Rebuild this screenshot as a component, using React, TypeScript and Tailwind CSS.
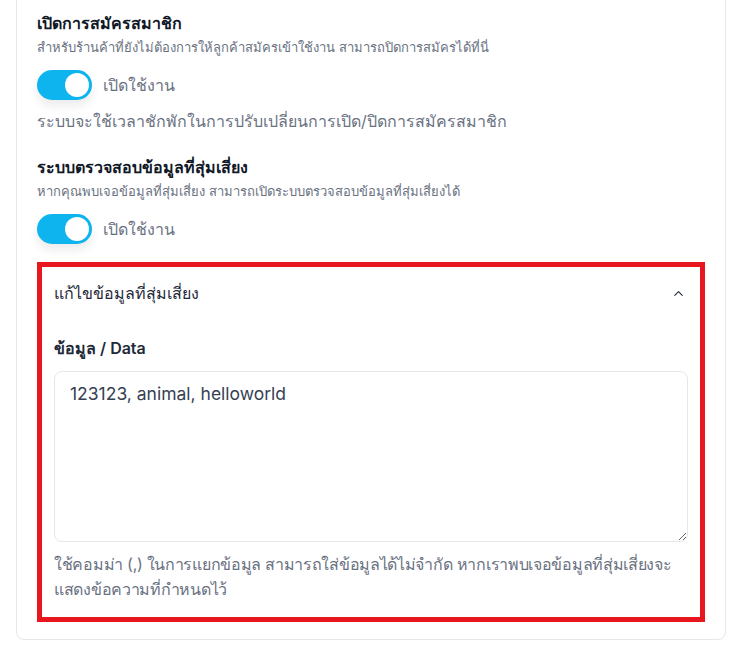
import { ChevronUp } from "lucide-react";

const font = { fontFamily: 'Inter, "Noto Sans", sans-serif' };

function Toggle() {
  return (
    <span className="relative inline-flex h-[30px] w-[55px] shrink-0 items-center rounded-full bg-[#0db4ee] shadow-[0_6px_10px_rgba(0,0,0,0.08)]">
      <span className="absolute right-[3px] h-[24px] w-[24px] rounded-full bg-white" />
    </span>
  );
}

function Setting({ title, desc, note }: { title: string; desc: string; note?: string }) {
  return (
    <div>
      <h3 className="text-[16px] font-semibold leading-6 text-gray-900">{title}</h3>
      <p className="mt-[2px] text-[13px] leading-5 text-gray-500">{desc}</p>
      <div className="mt-[13px] flex items-center gap-[11px]">
        <Toggle />
        <span className="text-[16px] text-gray-500">เปิดใช้งาน</span>
      </div>
      {note && <p className="mt-[9px] text-[16px] leading-6 text-gray-500">{note}</p>}
    </div>
  );
}

export default function App() {
  return (
    <div className="min-h-[648px] bg-white px-4 pb-[10px]" style={font}>
      <div className="-mt-4 w-[710px] rounded-lg border border-gray-200 px-5 pt-[26px] pb-[17px]">
        <Setting
          title="เปิดการสมัครสมาชิก"
          desc="สำหรับร้านค้าที่ยังไม่ต้องการให้ลูกค้าสมัครเข้าใช้งาน สามารถปิดการสมัครได้ที่นี่"
          note="ระบบจะใช้เวลาชักพักในการปรับเปลี่ยนการเปิด/ปิดการสมัครสมาชิก"
        />
        <div className="mt-[22px]">
          <Setting
            title="ระบบตรวจสอบข้อมูลที่สุ่มเสี่ยง"
            desc="หากคุณพบเจอข้อมูลที่สุ่มเสี่ยง สามารถเปิดระบบตรวจสอบข้อมูลที่สุ่มเสี่ยงได้"
          />
        </div>
        <section className="mt-[18px] border-[5px] border-[#e8171d] px-[12px] pt-[14px] pb-[15px]">
          <div className="flex items-center justify-between">
            <h4 className="text-[16px] font-medium leading-6 text-gray-800">แก้ไขข้อมูลที่สุ่มเสี่ยง</h4>
            <ChevronUp className="mr-[2px] h-[15px] w-[15px] text-gray-800" strokeWidth={1.75} />
          </div>
          <label className="mt-[31px] block text-[16px] font-semibold leading-6 text-gray-800">ข้อมูล / Data</label>
          <textarea
            readOnly
            defaultValue="123123, animal, helloworld"
            className="mt-[11px] block h-[171px] w-full rounded-lg border border-gray-200 px-[15px] py-[10px] text-[17.5px] leading-6 text-gray-700 outline-none"
            style={font}
          />
          <p className="mt-[10px] text-[16px] leading-[25px] tracking-[-0.3px] text-gray-500">
            ใช้คอมม่า (,) ในการแยกข้อมูล สามารถใส่ข้อมูลได้ไม่จำกัด หากเราพบเจอข้อมูลที่สุ่มเสี่ยงจะแสดงข้อความที่กำหนดไว้
          </p>
        </section>
      </div>
    </div>
  );
}
